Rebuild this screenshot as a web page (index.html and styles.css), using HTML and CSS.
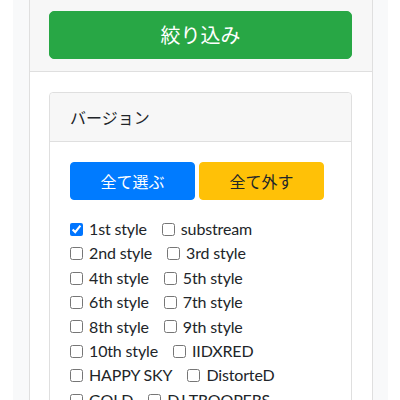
FILE: index.html
```html
<!DOCTYPE html>
<html lang="ja">
<head>
<meta charset="utf-8">
<link rel="stylesheet" href="styles.css">
</head>
<body>
<div class="page">
  <div class="card">
    <div class="card-header">
      <button class="btn btn-lg btn-success">絞り込み</button>
    </div>
    <div class="card-body">
      <div class="inner-card">
        <div class="inner-header">バージョン</div>
        <div class="inner-body">
          <div class="actions">
            <button class="btn btn-primary">全て選ぶ</button>
            <button class="btn btn-warning">全て外す</button>
          </div>
          <div class="checks">
            <label class="check"><input type="checkbox" checked><span>1st style</span></label>
            <label class="check"><input type="checkbox"><span>substream</span></label>
            <label class="check"><input type="checkbox"><span>2nd style</span></label>
            <label class="check"><input type="checkbox"><span>3rd style</span></label>
            <label class="check"><input type="checkbox"><span>4th style</span></label>
            <label class="check"><input type="checkbox"><span>5th style</span></label>
            <label class="check"><input type="checkbox"><span>6th style</span></label>
            <label class="check"><input type="checkbox"><span>7th style</span></label>
            <label class="check"><input type="checkbox"><span>8th style</span></label>
            <label class="check"><input type="checkbox"><span>9th style</span></label>
            <label class="check"><input type="checkbox"><span>10th style</span></label>
            <label class="check"><input type="checkbox"><span>IIDXRED</span></label>
            <label class="check"><input type="checkbox"><span>HAPPY SKY</span></label>
            <label class="check"><input type="checkbox"><span>DistorteD</span></label>
            <label class="check"><input type="checkbox"><span>GOLD</span></label>
            <label class="check"><input type="checkbox"><span>DJ TROOPERS</span></label>
          </div>
        </div>
      </div>
    </div>
  </div>
</div>
</body>
</html>
```
FILE: styles.css
```css
html, body {
  margin: 0;
  padding: 0;
  background: #fff;
  height: 400px;
  overflow: hidden;
}
body {
  font-family: Lato, "Noto Sans CJK JP", sans-serif;
  font-size: 16px;
  line-height: 1.5;
  color: #212529;
}
.page {
  margin-left: 13px;
  width: 344px;
  padding: 0 15px 0 16px;
  background: #f8f9fa;
  height: 400px;
}
.card {
  border: 1px solid #dfdfdf;
  border-top: none;
  background: #fff;
  height: 420px;
}
.card-header {
  background: #f7f7f7;
  padding: 11px 20px 12px 19px;
  border-bottom: 1px solid #dfdfdf;
}
.card-body {
  padding: 20px 20px 20px 19px;
}
.btn {
  font-family: "Noto Sans CJK JP", sans-serif;
  border: 1px solid transparent;
  border-radius: 4px;
  cursor: pointer;
  color: #fff;
  font-size: 16px;
  line-height: 24px;
  padding: 6px 0;
}
.btn-lg {
  display: block;
  width: 100%;
  font-size: 20px;
  line-height: 30px;
  padding: 8px 16px;
  border-radius: 5px;
}
.btn-success { background: #28a745; border-color: #28a745; }
.btn-primary { background: #007bff; border-color: #007bff; }
.btn-warning { background: #ffc107; border-color: #ffc107; color: #212529; }
.inner-card {
  border: 1px solid #dfdfdf;
  border-radius: 4px;
  background: #fff;
}
.inner-header {
  background: #f7f7f7;
  padding: 12px 20px;
  border-bottom: 1px solid #dfdfdf;
  border-radius: 4px 4px 0 0;
  font-family: "Noto Sans CJK JP", sans-serif;
}
.inner-body {
  padding: 20px;
}
.actions {
  display: flex;
  gap: 4px;
  margin-bottom: 17px;
}
.actions .btn {
  width: 125px;
}
.checks {
  display: flex;
  flex-wrap: wrap;
  line-height: 24.4px;
  letter-spacing: -0.15px;
}
.check {
  display: inline-flex;
  align-items: center;
  margin-right: 15px;
}
.check input {
  width: 13px;
  height: 13px;
  margin: 0 6px 0 0;
}
```
